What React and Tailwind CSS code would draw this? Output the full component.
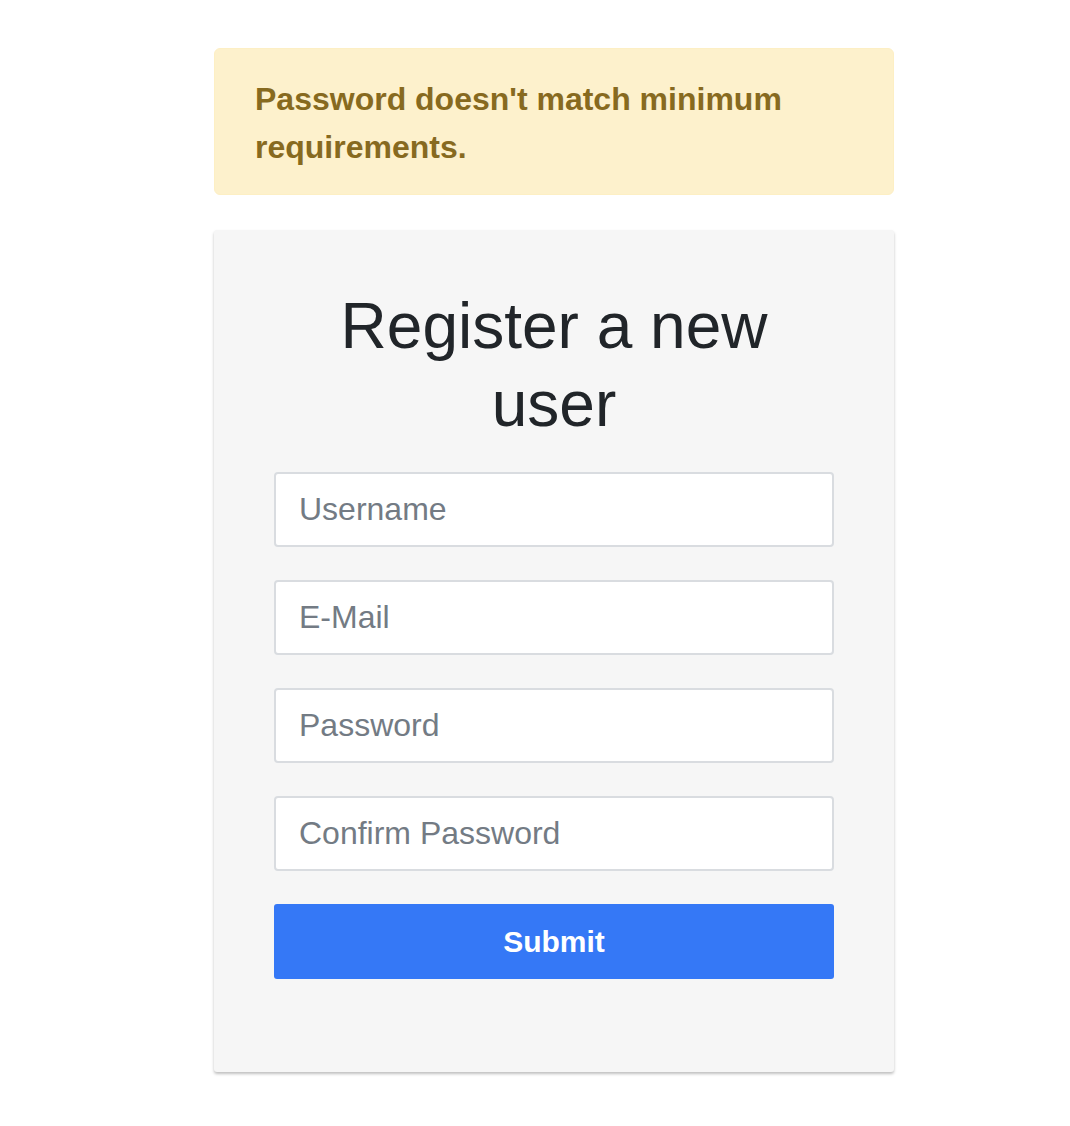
const FIELDS = [
  { type: 'text', placeholder: 'Username' },
  { type: 'email', placeholder: 'E-Mail' },
  { type: 'password', placeholder: 'Password' },
  { type: 'password', placeholder: 'Confirm Password' },
]

function Alert({ children }) {
  return (
    <div className="rounded-[6px] border border-[#fdefc4] bg-[#fdf1cc] px-[40px] pt-[26px] pb-[23px] text-[32px] font-bold leading-[48px] text-[#876a1f]">
      {children}
    </div>
  )
}

function Field({ type, placeholder }) {
  return (
    <input
      type={type}
      placeholder={placeholder}
      className="h-[75px] w-full rounded-[4px] border-2 border-[#d9dce0] bg-white px-[23px] text-[32px] text-[#495057] outline-none placeholder:text-[#737b84]"
    />
  )
}

export default function App() {
  return (
    <div className="min-h-[1126px] bg-white pt-[48px] pl-[214px] font-['Liberation_Sans',Arial,sans-serif]">
      <div className="flex w-[680px] flex-col gap-[35px]">
        <Alert>Password doesn't match minimum requirements.</Alert>

        <form
          onSubmit={(event) => event.preventDefault()}
          className="rounded-[3px] bg-[#f6f6f6] px-[60px] pt-[57px] pb-[93px] shadow-[0_2px_3px_rgba(0,0,0,0.25)]"
        >
          <h1 className="text-center text-[64px] leading-[78px] font-normal text-[#212529]">
            Register a new user
          </h1>
          <div className="mt-[29px] flex flex-col gap-[33px]">
            {FIELDS.map((field) => (
              <Field key={field.placeholder} {...field} />
            ))}
            <button
              type="submit"
              className="h-[75px] w-full rounded-[3px] bg-[#3578f6] text-[30px] font-bold text-white"
            >
              Submit
            </button>
          </div>
        </form>
      </div>
    </div>
  )
}
